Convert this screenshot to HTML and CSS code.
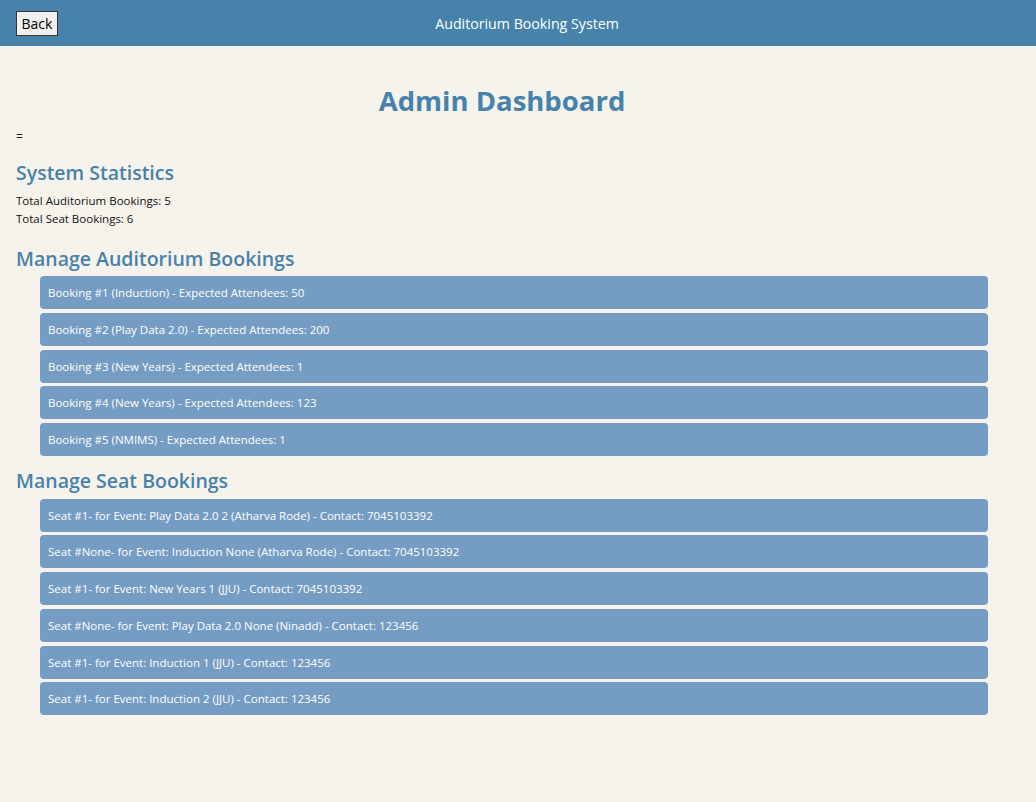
FILE: index.html
```html
<!DOCTYPE html>
<html>
<head>
<meta charset="utf-8">
<link rel="stylesheet" href="styles.css">
</head>
<body>
<header class="topbar">
  <button class="back">Back</button>
  <div class="title">Auditorium Booking System</div>
</header>
<main class="content">
  <h1 class="page-title">Admin Dashboard</h1>
  <p class="eq">=</p>
  <h2 class="section-title">System Statistics</h2>
  <div class="stats">
    <p class="stat">Total Auditorium Bookings: 5</p>
    <p class="stat">Total Seat Bookings: 6</p>
  </div>
  <h2 class="section-title">Manage Auditorium Bookings</h2>
  <ul class="list">
    <li class="item">Booking #1 (Induction) - Expected Attendees: 50</li>
    <li class="item">Booking #2 (Play Data 2.0) - Expected Attendees: 200</li>
    <li class="item">Booking #3 (New Years) - Expected Attendees: 1</li>
    <li class="item">Booking #4 (New Years) - Expected Attendees: 123</li>
    <li class="item">Booking #5 (NMIMS) - Expected Attendees: 1</li>
  </ul>
  <h2 class="section-title">Manage Seat Bookings</h2>
  <ul class="list">
    <li class="item">Seat #1- for Event: Play Data 2.0 2 (Atharva Rode) - Contact: 7045103392</li>
    <li class="item">Seat #None- for Event: Induction None (Atharva Rode) - Contact: 7045103392</li>
    <li class="item">Seat #1- for Event: New Years 1 (JJU) - Contact: 7045103392</li>
    <li class="item">Seat #None- for Event: Play Data 2.0 None (Ninadd) - Contact: 123456</li>
    <li class="item">Seat #1- for Event: Induction 1 (JJU) - Contact: 123456</li>
    <li class="item">Seat #1- for Event: Induction 2 (JJU) - Contact: 123456</li>
  </ul>
</main>
</body>
</html>
```
FILE: styles.css
```css
* { box-sizing: border-box; }
html, body { margin: 0; padding: 0; }
body {
  background: #f6f3ec;
  font-family: "Open Sans", "Noto Sans", sans-serif;
  color: #111;
  font-size: 11.5px;
}
.topbar {
  height: 46px;
  background: #4682aa;
  display: flex;
  align-items: center;
  padding: 0 16px;
}
.back {
  font-family: "Open Sans", sans-serif;
  font-size: 14px;
  background: #f0f0f0;
  border: 1px solid #333;
  border-radius: 0;
  height: 25px;
  width: 42px;
  padding: 0;
  color: #000;
  margin-top: 1px;
}
.title {
  flex: 1;
  text-align: center;
  color: #fff;
  font-size: 14.2px;
  padding-right: 24px;
}
.content {
  padding: 0 48px 0 16px;
}
.page-title {
  margin: 36px 0 0;
  text-align: center;
  color: #4682aa;
  font-size: 27.5px;
  font-weight: 700;
  line-height: 1.4;
}
.eq { margin: 0; line-height: 18px; padding: 7px 0 1px; font-size: 12px; }
.section-title {
  color: #4682aa;
  font-size: 19.5px;
  font-weight: 600;
  margin: 13px 0 0;
  line-height: 1.3;
}
.list + .section-title { margin-top: 12px; }
.stats { padding: 7px 0 5px; }
.stat { margin: 0; line-height: 18px; }
.list {
  list-style: none;
  margin: 5px 0 0;
  padding: 0 0 0 24px;
  display: flex;
  flex-direction: column;
  gap: 3.75px;
}
.item {
  background: #759cc2;
  color: #fff;
  border-radius: 4px;
  height: 33px;
  padding: 0 8px;
  display: flex;
  align-items: center;
}
```
